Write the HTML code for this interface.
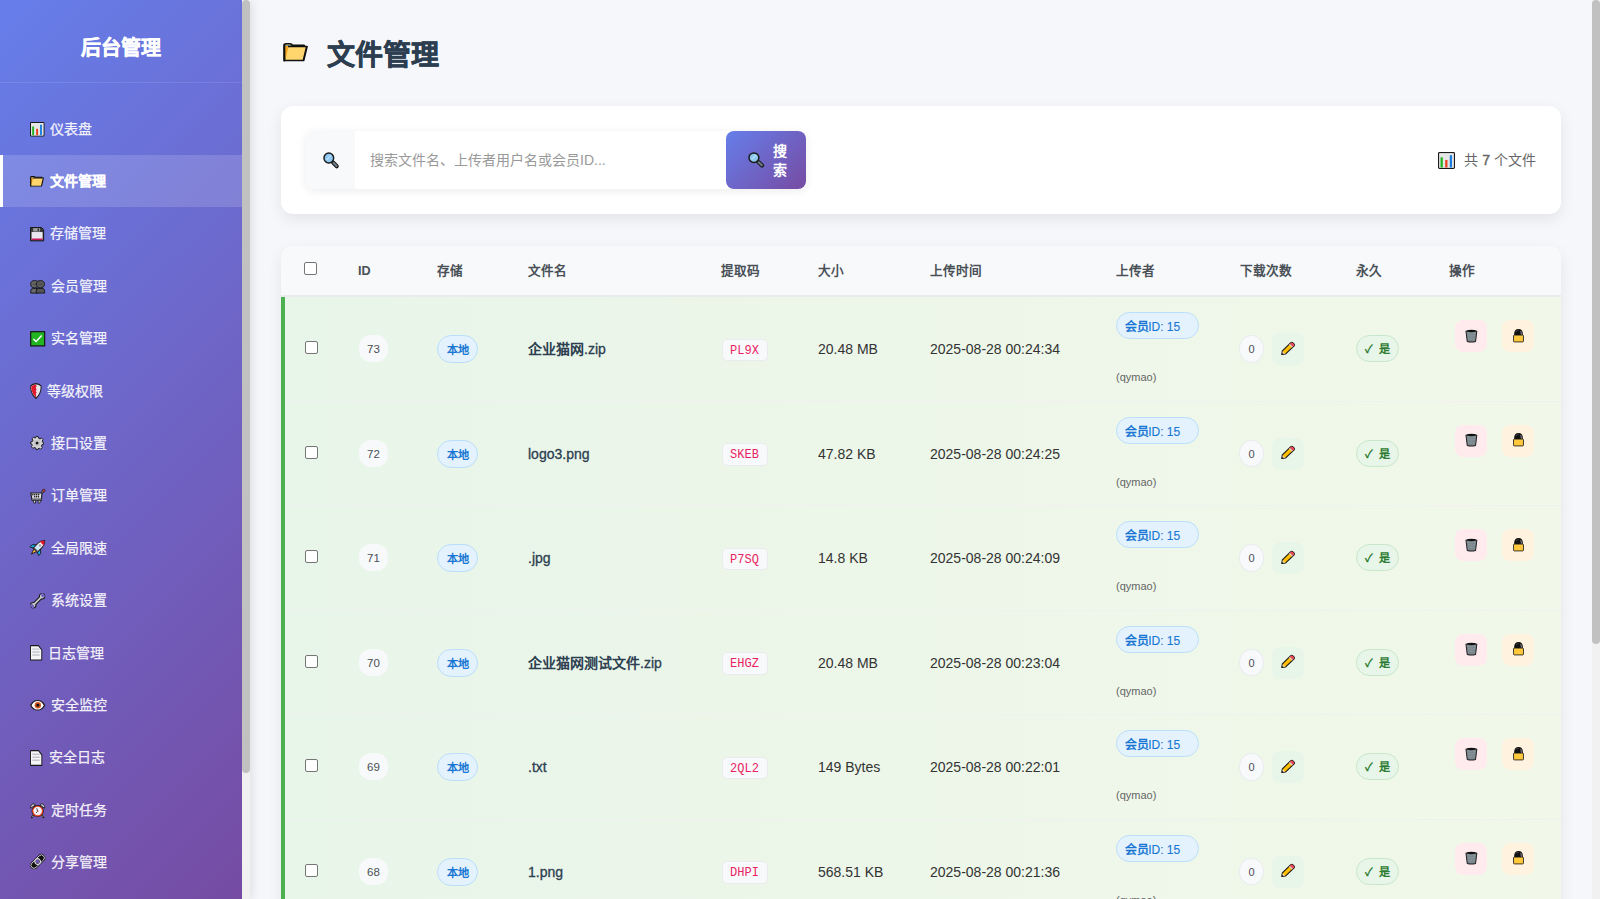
<!DOCTYPE html>
<html lang="zh-CN">
<head>
<meta charset="utf-8">
<title>文件管理</title>
<style>
*{margin:0;padding:0;box-sizing:border-box;}
html,body{width:1600px;height:899px;overflow:hidden;}
body{font-family:"Liberation Sans",sans-serif;background:#f5f7fa;color:#333;position:relative;}
.sidebar{position:absolute;left:0;top:0;width:250px;height:899px;background:linear-gradient(135deg,#667eea 0%,#764ba2 100%);box-shadow:2px 0 10px rgba(0,0,0,0.1);z-index:2;overflow:hidden;}
.sb-track{position:absolute;left:242px;top:0;width:8px;height:899px;background:#f1f1f1;}
.sb-thumb{position:absolute;left:242px;top:0;width:8px;height:773px;background:#c1c1c1;border-radius:4px;}
.sb-head{position:absolute;left:0;top:0;width:242px;height:83px;border-bottom:1px solid rgba(255,255,255,0.1);}
.sb-head h2{position:absolute;left:0;width:242px;top:34px;text-align:center;color:#fff;font-size:20px;font-weight:bold;line-height:28px;-webkit-text-stroke:0.4px #fff;}
.nav{position:absolute;left:0;top:102.6px;width:242px;}
.nav a{position:absolute;left:0;width:242px;height:52.4px;line-height:52.4px;color:rgba(255,255,255,0.9);font-size:14px;text-decoration:none;white-space:nowrap;}
.nt{position:absolute;top:0;-webkit-text-stroke:0.25px rgba(255,255,255,0.9);}
.ic{position:absolute;overflow:visible;}
.nav a.active{background:rgba(255,255,255,0.15);box-shadow:inset 3px 0 0 #fff;color:#fff;font-weight:bold;}

.page-track{position:absolute;left:1592px;top:0;width:8px;height:899px;background:#f1f1f1;}
.page-thumb{position:absolute;left:1592px;top:0;width:8px;height:644px;background:#c1c1c1;border-radius:4px;}
.main{position:absolute;left:250px;top:0;width:1342px;height:899px;}
.title{position:absolute;left:77px;top:33px;height:46px;line-height:46px;font-size:28px;font-weight:bold;color:#2c3e50;white-space:nowrap;-webkit-text-stroke:0.5px #2c3e50;}
.card{position:absolute;left:31px;width:1280px;background:#fff;border-radius:12px;box-shadow:0 5px 15px rgba(0,0,0,0.08);}

.search{position:absolute;left:25px;top:25px;width:500px;height:58px;border-radius:8px;box-shadow:0 2px 10px rgba(0,0,0,0.08);background:#fff;}
.search .pre{position:absolute;left:0;top:0;width:49px;height:58px;background:#f8f9fa;border-radius:8px 0 0 8px;text-align:center;line-height:58px;font-size:14px;}
.search .ph{position:absolute;left:64px;top:0;line-height:58px;font-size:14px;color:#999;white-space:nowrap;}
.sbtn{position:absolute;left:445px;top:25px;width:80px;height:58px;border-radius:8px;background:linear-gradient(135deg,#667eea 0%,#764ba2 100%);color:#fff;}
.sbtn .emo{position:absolute;left:21px;top:19px;font-size:14px;line-height:20px;}
.sbtn .t{position:absolute;left:47px;top:11px;width:14px;font-size:14px;line-height:19px;font-weight:bold;}
.info{position:absolute;right:25px;top:25px;line-height:58px;font-size:14px;color:#666;white-space:nowrap;}
.info b{font-weight:normal;-webkit-text-stroke:0.45px #666;}
.card .ic,.search .ic,.sbtn .ic,.main > .ic{position:absolute;}
.tcard{overflow:hidden;}
.thead{position:absolute;left:0;top:0;width:1280px;height:51px;background:#f8f9fa;border-bottom:2px solid #e9ecef;}
.thead span{position:absolute;top:0;line-height:51px;font-size:12.6px;font-weight:bold;color:#495057;white-space:nowrap;}
.cb{position:absolute;width:13px;height:13px;border:1px solid #767676;border-radius:2px;background:#fff;}
.thead .cb{left:23px;top:16px;}
.rows{position:absolute;left:0;top:51px;width:1280px;}
.row{position:relative;height:104.5px;border-bottom:1px solid #f0f0f0;margin-left:4px;background:linear-gradient(90deg,#e8f5e9 0%,#f1f8e9 100%);}
.gbar{position:absolute;left:-4px;top:0;width:4px;height:105.5px;background:#4caf50;}
.ck{font-weight:bold;margin-right:2px;}
.ubl{font-weight:normal;-webkit-text-stroke:0.1px #1976d2;letter-spacing:0;}
.row > span{position:absolute;white-space:nowrap;}
.row .cb{left:20px;top:44px;}
.idb{left:74px;top:38.4px;width:29px;height:27px;line-height:29px;text-align:center;background:#f8f9fa;border-radius:12px;font-size:11.5px;color:#495057;}
.stb{left:152px;top:38px;width:41px;height:28px;line-height:28px;text-align:center;background:#e3f2fd;border:1px solid #bbdefb;border-radius:14px;font-size:11.2px;font-weight:bold;color:#1976d2;}
.fn{left:243px;top:40px;line-height:24px;font-size:14px;font-weight:normal;color:#2c3e50;-webkit-text-stroke:0.3px #2c3e50;}
.fn b{-webkit-text-stroke:0;}
.code{left:436.5px;top:41.5px;width:46px;height:22.5px;line-height:21px;text-align:center;background:#f8f9fa;border:1px solid #e9ecef;border-radius:5px;font-family:"Liberation Mono",monospace;font-size:12px;line-height:22px;color:#e91e63;}
.sz{left:533px;top:40px;line-height:24px;font-size:14px;color:#333;}
.tm{left:645px;top:40px;line-height:24px;font-size:14px;color:#333;}
.ub{left:831px;top:15.4px;width:83px;height:27px;line-height:28px;padding-left:8px;background:#e3f2fd;border:1px solid #bbdefb;border-radius:14px;font-size:12px;font-weight:bold;color:#1976d2;letter-spacing:-0.4px;}
.un{left:831px;top:72px;line-height:16px;font-size:11px;color:#666;}
.dc{left:954.4px;top:38px;width:24.4px;height:27.5px;line-height:27px;text-align:center;background:#f8f9fa;border:1px solid #e9ecef;border-radius:50%;font-size:11px;color:#495057;}
.edit{left:987px;top:36px;width:32px;height:32px;line-height:32px;text-align:center;background:#e8f5e9;border-radius:8px;font-size:14px;}
.perm{left:1071px;top:38px;width:43px;height:27px;line-height:26px;text-align:center;background:#e8f5e9;border:1px solid #c8e6c9;border-radius:14px;font-size:11.2px;font-weight:bold;color:#2e7d32;}
.del{left:1170px;top:23px;width:32px;height:32px;line-height:32px;text-align:center;background:#ffebee;border-radius:8px;font-size:14px;}
.lock{left:1217px;top:23px;width:32px;height:32px;line-height:32px;text-align:center;background:#fff3e0;border-radius:8px;font-size:14px;}
</style>
</head>
<body>
<div class="sidebar">
  <div class="sb-head"><h2>后台管理</h2></div>
  <div class="nav">
    <a style="top:0.00px"><svg class="ic" style="left:30px;top:19.400000000000006px;width:14.5px;height:14.5px;" viewBox="0 0 16 16" preserveAspectRatio="none"><rect x="0.6" y="0.6" width="14.8" height="14.8" rx="0.8" fill="#f2f2f2" stroke="#1a1a1a" stroke-width="1.2"/><rect x="1.3" y="1.3" width="13.4" height="13.4" fill="#e6e6e6"/><rect x="2.4" y="5" width="2.1" height="9.6" fill="#21b321"/><rect x="6.8" y="7.5" width="2.1" height="7.1" fill="#e8401c"/><rect x="11.1" y="3" width="2.1" height="11.6" fill="#1b7de0"/></svg><span class="nt" style="left:50px">仪表盘</span></a>
    <a class="active" style="top:52.40px"><svg class="ic" style="left:30px;top:21.0px;width:14px;height:10.6px;" viewBox="0 0 16 16" preserveAspectRatio="none"><path d="M0.8 15.2 V1.9 Q0.8 0.7 2.1 0.7 H4.4 Q5.5 0.7 5.9 1.9 H13.4 V3.4 L0.8 15.2 Z" fill="#f2a51c" stroke="#111" stroke-width="1.4" stroke-linejoin="round"/><path d="M1.7 2.4 Q1.7 1.6 2.5 1.6 H4.3 Q4.9 1.6 5.1 2.4 Z" fill="#3d9be0"/><path d="M3.6 3 H15.3 L13.1 15.2 H1.4 Z" fill="#ffd56e"/><path d="M3.2 3 H15.3 L13.1 15.2 H0.8" fill="none" stroke="#111" stroke-width="1.3" stroke-linejoin="round"/></svg><span class="nt" style="left:50px">文件管理</span></a>
    <a style="top:104.80px"><svg class="ic" style="left:30px;top:19.600000000000023px;width:14.2px;height:14.4px;" viewBox="0 0 16 16" preserveAspectRatio="none"><path d="M0.6 0.6 H13 L15.4 3 V15.4 H0.6 Z" fill="#3c3c3c" stroke="#151515" stroke-width="1.1" stroke-linejoin="round"/><rect x="3.6" y="1.2" width="7.6" height="3.8" fill="#9c9c9c"/><rect x="8.6" y="1.7" width="1.4" height="2.8" fill="#222"/><rect x="1.8" y="5.6" width="12.4" height="8.9" fill="#e9e8f0"/><rect x="1.8" y="12.8" width="12.4" height="1.7" fill="#c8175a"/></svg><span class="nt" style="left:50px">存储管理</span></a>
    <a style="top:157.20px"><svg class="ic" style="left:30px;top:20.200000000000045px;width:15.3px;height:13.8px;" viewBox="0 0 16 16" preserveAspectRatio="none"><path d="M0.8 15.2 V12.6 Q0.8 9.8 3.5 9.8 H8 V15.2 Z" fill="#6a6a6a" stroke="#151515" stroke-width="1"/><path d="M6.5 15.2 V12.6 Q6.5 9.8 9.2 9.8 H12.6 Q15.3 9.8 15.3 12.6 V15.2 Z" fill="#555" stroke="#151515" stroke-width="1"/><circle cx="4.9" cy="4.9" r="4.2" fill="#666" stroke="#151515" stroke-width="1"/><circle cx="10.9" cy="4.9" r="4.2" fill="#5a5a5a" stroke="#151515" stroke-width="1"/><path d="M3 5 H7 M9 5 H13" stroke="#333" stroke-width="0.6"/></svg><span class="nt" style="left:51px">会员管理</span></a>
    <a style="top:209.60px"><svg class="ic" style="left:30px;top:19.0px;width:15.3px;height:15.6px;" viewBox="0 0 16 16" preserveAspectRatio="none"><rect x="0.7" y="0.7" width="14.6" height="14.6" fill="#22b522" stroke="#1a1a1a" stroke-width="1.3"/><path d="M3.6 8.2 L6.4 10.8 L12.2 4.6" fill="none" stroke="#fff" stroke-width="1.5"/></svg><span class="nt" style="left:51px">实名管理</span></a>
    <a style="top:262.00px"><svg class="ic" style="left:30px;top:18.19999999999999px;width:11.8px;height:16px;" viewBox="0 0 16 16" preserveAspectRatio="none"><path d="M8 0.7 Q12.5 1.2 15.2 3 Q15.2 11 8 15.4 Q0.8 11 0.8 3 Q3.5 1.2 8 0.7 Z" fill="#e8e8ec" stroke="#1a1a1a" stroke-width="1.3" stroke-linejoin="round"/><path d="M8 1.6 L9 3.2 L7.8 4.8 L9 6.4 L7.8 8 L9 9.6 L7.8 11.2 L8.6 12.8 L8 14.4 Q2 10.6 1.7 3.6 Q4.4 2 8 1.6 Z" fill="#e0182d"/></svg><span class="nt" style="left:47px">等级权限</span></a>
    <a style="top:314.40px"><svg class="ic" style="left:30px;top:18.80000000000001px;width:14.1px;height:14.2px;" viewBox="0 0 16 16" preserveAspectRatio="none"><path d="M6.6 0.7 H9.4 L9.8 2.6 L11.4 3.3 L13 2.2 L14.9 4.1 L13.8 5.7 L14.5 7.3 L15.3 7.6 V9.4 L13.6 9.8 L12.9 11.4 L14 13 L12.1 14.9 L10.5 13.8 L9.1 14.4 L8.8 15.3 H7 L6.6 13.6 L5 12.9 L3.4 14 L1.5 12.1 L2.6 10.5 L1.9 8.9 L0.7 8.6 V6.8 L2.6 6.4 L3.3 4.8 L2.2 3.2 L4.1 1.3 L5.7 2.4 L6.3 2.1 Z" fill="#d6d6d6" stroke="#1a1a1a" stroke-width="1.1" stroke-linejoin="round"/><circle cx="8" cy="8" r="3.8" fill="#c4c4c4"/><circle cx="8" cy="8" r="1.6" fill="#111"/></svg><span class="nt" style="left:51px">接口设置</span></a>
    <a style="top:366.80px"><svg class="ic" style="left:30px;top:19.30000000000001px;width:15.3px;height:15.1px;" viewBox="0 0 16 16" preserveAspectRatio="none"><path d="M12.2 4.6 L13.8 1.8" stroke="#1a1a1a" stroke-width="2"/><path d="M12.2 4.6 L13.8 1.8" stroke="#ccc" stroke-width="0.8"/><circle cx="14.4" cy="1.7" r="1.5" fill="#c9403a" stroke="#1a1a1a" stroke-width="0.7"/><path d="M0.8 4.2 H12.6 L11.8 12 H2.2 Z" fill="#dcdce2" stroke="#1a1a1a" stroke-width="1.2" stroke-linejoin="round"/><rect x="2.2" y="9.8" width="9.6" height="2.2" fill="#77777f"/><g fill="#111"><circle cx="3" cy="6.2" r="0.8"/><circle cx="5" cy="6.2" r="0.8"/><circle cx="7" cy="6.2" r="0.8"/><circle cx="9" cy="6.2" r="0.8"/><circle cx="4.9" cy="8.3" r="0.8"/><circle cx="6.9" cy="8.3" r="0.8"/><circle cx="8.9" cy="8.3" r="0.8"/></g><path d="M3.2 12 L4.2 15 L5.8 15 L5.6 12 Z M8.6 12 L8.6 15 L10.2 15 L11 12 Z" fill="#ececf0" stroke="#1a1a1a" stroke-width="0.9" stroke-linejoin="round"/></svg><span class="nt" style="left:51px">订单管理</span></a>
    <a style="top:419.20px"><svg class="ic" style="left:30px;top:18.5px;width:15.3px;height:15.6px;" viewBox="0 0 16 16" preserveAspectRatio="none"><g transform="rotate(45 8 8)"><path d="M6 11.2 H10 L8 17.2 Z" fill="#f58a1f" stroke="#1a1a1a" stroke-width="0.9" stroke-linejoin="round"/><path d="M7 12 H9 L8 15 Z" fill="#ffd23f"/><path d="M5.2 6.4 L1.6 10 V13 L5.2 11.4 Z M10.8 6.4 L14.4 10 V13 L10.8 11.4 Z" fill="#12b0ec" stroke="#1a1a1a" stroke-width="0.9" stroke-linejoin="round"/><path d="M8 -2.6 Q11 0 11 4 V11.6 H5 V4 Q5 0 8 -2.6 Z" fill="#f6f6fa" stroke="#1a1a1a" stroke-width="1" stroke-linejoin="round"/><path d="M8 -2.1 Q10.2 -0.2 10.6 2 H5.4 Q5.8 -0.2 8 -2.1 Z" fill="#e8132b"/><rect x="5.5" y="10" width="5" height="1.6" fill="#555"/><circle cx="8" cy="4.6" r="1.5" fill="#a8a8b0"/><path d="M6.6 7.4 V9 M8 7.4 V9 M9.4 7.4 V9" stroke="#3ab0e8" stroke-width="0.8"/></g></svg><span class="nt" style="left:51px">全局限速</span></a>
    <a style="top:471.60px"><svg class="ic" style="left:30px;top:19.100000000000023px;width:15.3px;height:15.5px;" viewBox="0 0 16 16" preserveAspectRatio="none"><mask id="wmask"><rect x="-2" y="-2" width="20" height="20" fill="#fff"/><path d="M12.6 -0.6 L16.6 3.4 L13.4 4.6 L11.4 2.6 Z M-0.6 12.6 L3.4 16.6 L4.6 13.4 L2.6 11.4 Z" fill="#000"/></mask><g mask="url(#wmask)"><path d="M3 13 L13 3" stroke="#1a1a1a" stroke-width="3.8" stroke-linecap="round"/><circle cx="12.6" cy="3.4" r="2.8" fill="#c8c8c8" stroke="#1a1a1a" stroke-width="1.1"/><circle cx="3.4" cy="12.6" r="2.8" fill="#c8c8c8" stroke="#1a1a1a" stroke-width="1.1"/><path d="M3 13 L13 3" stroke="#c8c8c8" stroke-width="1.8" stroke-linecap="round"/></g></svg><span class="nt" style="left:51px">系统设置</span></a>
    <a style="top:524.00px"><svg class="ic" style="left:30px;top:18.600000000000023px;width:12.3px;height:15.7px;" viewBox="0 0 16 16" preserveAspectRatio="none"><path d="M0.7 0.7 H11 L15.3 5 V15.3 H0.7 Z" fill="#f6f6f8" stroke="#1a1a1a" stroke-width="1.2" stroke-linejoin="round"/><path d="M3 4.2 H12.6 M3 7.2 H12.6 M3 10.2 H12.6" stroke="#c4c4cc" stroke-width="1.4"/></svg><span class="nt" style="left:48px">日志管理</span></a>
    <a style="top:576.40px"><svg class="ic" style="left:30px;top:20.600000000000023px;width:15.3px;height:10.7px;" viewBox="0 0 16 16" preserveAspectRatio="none"><path d="M0.8 8 Q3.5 0.9 8 0.9 Q12.5 0.9 15.2 8 Q12.5 15.1 8 15.1 Q3.5 15.1 0.8 8 Z" fill="#fff" stroke="#1a1a1a" stroke-width="1.5"/><ellipse cx="8.2" cy="8" rx="3.3" ry="4.9" fill="#d2561e"/><ellipse cx="8.2" cy="8" rx="1.5" ry="2.2" fill="#111"/></svg><span class="nt" style="left:51px">安全监控</span></a>
    <a style="top:628.80px"><svg class="ic" style="left:30px;top:18.600000000000023px;width:12.4px;height:16px;" viewBox="0 0 16 16" preserveAspectRatio="none"><path d="M0.7 0.7 H11 L15.3 5 V15.3 H0.7 Z" fill="#f6f6f8" stroke="#1a1a1a" stroke-width="1.2" stroke-linejoin="round"/><path d="M3 4.2 H12.6 M3 7.2 H12.6 M3 10.2 H12.6" stroke="#c4c4cc" stroke-width="1.4"/></svg><span class="nt" style="left:48.5px">安全日志</span></a>
    <a style="top:681.20px"><svg class="ic" style="left:30px;top:19.200000000000045px;width:15.3px;height:15px;" viewBox="0 0 16 16" preserveAspectRatio="none"><path d="M0.8 5.6 Q0 1.4 4.4 0.8 L5.4 2.2 Z M15.2 5.6 Q16 1.4 11.6 0.8 L10.6 2.2 Z" fill="#d8d8de" stroke="#1a1a1a" stroke-width="0.9" stroke-linejoin="round"/><path d="M3.6 13 L1.8 15.4 M12.4 13 L14.2 15.4" stroke="#1a1a1a" stroke-width="1.8" stroke-linecap="round"/><path d="M3.6 13 L2.2 15 M12.4 13 L13.8 15" stroke="#ccc" stroke-width="0.7"/><circle cx="8" cy="8.6" r="6.4" fill="#1a1a1a"/><circle cx="8" cy="8.6" r="5.8" fill="#e8401c"/><circle cx="8" cy="8.6" r="4.5" fill="#f2f2fa"/><path d="M7 5.6 L8 8.6 L6.4 10.6" stroke="#333" stroke-width="0.9" fill="none"/><circle cx="8.3" cy="8.6" r="0.7" fill="#d33"/></svg><span class="nt" style="left:51px">定时任务</span></a>
    <a style="top:733.60px"><svg class="ic" style="left:30px;top:18.199999999999932px;width:15.3px;height:15.2px;" viewBox="0 0 16 16" preserveAspectRatio="none"><g transform="rotate(-45 8 8)"><path d="M2.6 3.9 H13.4 A4.1 4.1 0 0 1 13.4 12.1 H2.6 A4.1 4.1 0 0 1 2.6 3.9 Z M10.1 8 A2.1 2.1 0 1 0 5.9 8 A2.1 2.1 0 1 0 10.1 8 Z" fill="#111" fill-rule="evenodd"/><rect x="-0.6" y="4.9" width="17.2" height="6.2" rx="3.1" fill="none" stroke="#e0e0e4" stroke-width="0.9"/><circle cx="8" cy="8" r="2.9" fill="none" stroke="#e0e0e4" stroke-width="1.1"/></g></svg><span class="nt" style="left:51px">分享管理</span></a>
  </div>
  <div class="sb-track"></div>
  <div class="sb-thumb"></div>
</div>
<div class="main">
  <svg class="ic" style="left:33.10000000000002px;top:42.5px;width:25px;height:18.5px;" viewBox="0 0 16 16" preserveAspectRatio="none"><path d="M0.8 15.2 V1.9 Q0.8 0.7 2.1 0.7 H4.4 Q5.5 0.7 5.9 1.9 H13.4 V3.4 L0.8 15.2 Z" fill="#f2a51c" stroke="#111" stroke-width="1.4" stroke-linejoin="round"/><path d="M1.7 2.4 Q1.7 1.6 2.5 1.6 H4.3 Q4.9 1.6 5.1 2.4 Z" fill="#3d9be0"/><path d="M3.6 3 H15.3 L13.1 15.2 H1.4 Z" fill="#ffd56e"/><path d="M3.2 3 H15.3 L13.1 15.2 H0.8" fill="none" stroke="#111" stroke-width="1.3" stroke-linejoin="round"/></svg>
  <div class="title">文件管理</div>
  <div class="card" style="top:106px;height:108px;">
    <div class="search"><span class="pre"></span><svg class="ic" style="left:16.80000000000001px;top:21px;width:15.5px;height:16px;" viewBox="0 0 16 16" preserveAspectRatio="none"><path d="M10.4 10.4 L14.2 14.2" stroke="#1a1a1a" stroke-width="4.2" stroke-linecap="round"/><path d="M10.8 10.8 L14 14" stroke="#6e7f88" stroke-width="2" stroke-linecap="round"/><circle cx="6" cy="6" r="5" fill="#8ec8f0" stroke="#1a1a1a" stroke-width="1.5"/><path d="M3.6 8 L8.2 3.4" stroke="#b8e0fa" stroke-width="1.2"/></svg><span class="ph">搜索文件名、上传者用户名或会员ID...</span></div>
    <div class="sbtn"><svg class="ic" style="left:21.600000000000023px;top:21.400000000000006px;width:15.8px;height:15.2px;" viewBox="0 0 16 16" preserveAspectRatio="none"><path d="M10.4 10.4 L14.2 14.2" stroke="#1a1a1a" stroke-width="4.2" stroke-linecap="round"/><path d="M10.8 10.8 L14 14" stroke="#6e7f88" stroke-width="2" stroke-linecap="round"/><circle cx="6" cy="6" r="5" fill="#8ec8f0" stroke="#1a1a1a" stroke-width="1.5"/><path d="M3.6 8 L8.2 3.4" stroke="#b8e0fa" stroke-width="1.2"/></svg><span class="t">搜索</span></div>
    <svg class="ic" style="left:1157px;top:45.80000000000001px;width:17px;height:17px;" viewBox="0 0 16 16" preserveAspectRatio="none"><rect x="0.6" y="0.6" width="14.8" height="14.8" rx="0.8" fill="#f2f2f2" stroke="#1a1a1a" stroke-width="1.2"/><rect x="1.3" y="1.3" width="13.4" height="13.4" fill="#e6e6e6"/><rect x="2.4" y="5" width="2.1" height="9.6" fill="#21b321"/><rect x="6.8" y="7.5" width="2.1" height="7.1" fill="#e8401c"/><rect x="11.1" y="3" width="2.1" height="11.6" fill="#1b7de0"/></svg>
    <div class="info">共 <b>7</b> 个文件</div>
  </div>
  <div class="card tcard" style="top:246px;height:760px;">
    <div class="thead">
      <span class="cb"></span>
      <span style="left:77px">ID</span>
      <span style="left:156px">存储</span>
      <span style="left:247px">文件名</span>
      <span style="left:440px">提取码</span>
      <span style="left:537px">大小</span>
      <span style="left:649px">上传时间</span>
      <span style="left:835px">上传者</span>
      <span style="left:959px">下载次数</span>
      <span style="left:1075px">永久</span>
      <span style="left:1168px">操作</span>
    </div>
    <div class="rows">
    <div class="row">
      <span class="gbar"></span>
      <span class="cb"></span>
      <span class="idb">73</span>
      <span class="stb">本地</span>
      <span class="fn"><b>企业猫网</b>.zip</span>
      <span class="code">PL9X</span>
      <span class="sz">20.48 MB</span>
      <span class="tm">2025-08-28 00:24:34</span>
      <span class="ub">会员<span class="ubl">ID: 15</span></span>
      <span class="un">(qymao)</span>
      <span class="dc">0</span>
      <span class="edit"></span><svg class="ic" style="left:996.0999999999999px;top:44.9px;width:13.8px;height:13.3px;" viewBox="0 0 16 16" preserveAspectRatio="none"><path d="M0.9 15.1 L1.6 10.6 L11.4 0.8 Q12.6 -0.2 13.8 1 L15 2.2 Q16.2 3.4 15.2 4.6 L5.4 14.4 Z" fill="#ffbf00" stroke="#1a1a1a" stroke-width="1.3" stroke-linejoin="round"/><path d="M11.6 1 Q12.6 0.2 13.6 1.2 L14.8 2.4 Q15.8 3.4 15 4.4 L13.4 6 L10 2.6 Z" fill="#e8485a"/><path d="M9.8 2.8 L13.2 6.2" stroke="#d8d8e0" stroke-width="1.3"/><path d="M1.5 14.5 L2 11 L5 14 Z" fill="#f8d8b8"/><path d="M0.9 15.1 L1.3 12.8 L3.2 14.7 Z" fill="#222"/></svg>
      <span class="perm"><span class="ck">✓</span> 是</span>
      <span class="del"></span><svg class="ic" style="left:1180px;top:31.9px;width:12.8px;height:13.7px;" viewBox="0 0 16 16" preserveAspectRatio="none"><path d="M1.2 2.6 Q8 0.2 14.8 2.6 L13.2 14.6 Q8 16 2.8 14.6 Z" fill="#7c888e" stroke="#1a1a1a" stroke-width="1.2" stroke-linejoin="round"/><ellipse cx="8" cy="2.4" rx="5.6" ry="1.3" fill="#111"/><path d="M3.4 5 H12.6 M3.6 8 H12.4 M3.8 11 H12.2" stroke="#a4b0b6" stroke-width="0.7" stroke-dasharray="1 1"/></svg>
      <span class="lock"></span><svg class="ic" style="left:1228px;top:31.9px;width:11px;height:13.5px;" viewBox="0 0 16 16" preserveAspectRatio="none"><path d="M2.4 7.6 V5.6 Q2.4 0.7 8 0.7 Q13.6 0.7 13.6 5.6 V7.6 Z" fill="#111" stroke="#1a1a1a" stroke-width="1.2"/><path d="M11.2 2.6 Q12.2 4 12.2 7.2" stroke="#c8c8c8" stroke-width="0.9" fill="none"/><path d="M4.6 3 Q6 1.8 8 1.8" stroke="#777" stroke-width="0.6" fill="none"/><rect x="0.8" y="7.2" width="14.4" height="8.1" rx="1" fill="#ffc83d" stroke="#1a1a1a" stroke-width="1.1"/></svg>
    </div>
    <div class="row">
      <span class="gbar"></span>
      <span class="cb"></span>
      <span class="idb">72</span>
      <span class="stb">本地</span>
      <span class="fn">logo3.png</span>
      <span class="code">SKEB</span>
      <span class="sz">47.82 KB</span>
      <span class="tm">2025-08-28 00:24:25</span>
      <span class="ub">会员<span class="ubl">ID: 15</span></span>
      <span class="un">(qymao)</span>
      <span class="dc">0</span>
      <span class="edit"></span><svg class="ic" style="left:996.0999999999999px;top:44.9px;width:13.8px;height:13.3px;" viewBox="0 0 16 16" preserveAspectRatio="none"><path d="M0.9 15.1 L1.6 10.6 L11.4 0.8 Q12.6 -0.2 13.8 1 L15 2.2 Q16.2 3.4 15.2 4.6 L5.4 14.4 Z" fill="#ffbf00" stroke="#1a1a1a" stroke-width="1.3" stroke-linejoin="round"/><path d="M11.6 1 Q12.6 0.2 13.6 1.2 L14.8 2.4 Q15.8 3.4 15 4.4 L13.4 6 L10 2.6 Z" fill="#e8485a"/><path d="M9.8 2.8 L13.2 6.2" stroke="#d8d8e0" stroke-width="1.3"/><path d="M1.5 14.5 L2 11 L5 14 Z" fill="#f8d8b8"/><path d="M0.9 15.1 L1.3 12.8 L3.2 14.7 Z" fill="#222"/></svg>
      <span class="perm"><span class="ck">✓</span> 是</span>
      <span class="del"></span><svg class="ic" style="left:1180px;top:31.9px;width:12.8px;height:13.7px;" viewBox="0 0 16 16" preserveAspectRatio="none"><path d="M1.2 2.6 Q8 0.2 14.8 2.6 L13.2 14.6 Q8 16 2.8 14.6 Z" fill="#7c888e" stroke="#1a1a1a" stroke-width="1.2" stroke-linejoin="round"/><ellipse cx="8" cy="2.4" rx="5.6" ry="1.3" fill="#111"/><path d="M3.4 5 H12.6 M3.6 8 H12.4 M3.8 11 H12.2" stroke="#a4b0b6" stroke-width="0.7" stroke-dasharray="1 1"/></svg>
      <span class="lock"></span><svg class="ic" style="left:1228px;top:31.9px;width:11px;height:13.5px;" viewBox="0 0 16 16" preserveAspectRatio="none"><path d="M2.4 7.6 V5.6 Q2.4 0.7 8 0.7 Q13.6 0.7 13.6 5.6 V7.6 Z" fill="#111" stroke="#1a1a1a" stroke-width="1.2"/><path d="M11.2 2.6 Q12.2 4 12.2 7.2" stroke="#c8c8c8" stroke-width="0.9" fill="none"/><path d="M4.6 3 Q6 1.8 8 1.8" stroke="#777" stroke-width="0.6" fill="none"/><rect x="0.8" y="7.2" width="14.4" height="8.1" rx="1" fill="#ffc83d" stroke="#1a1a1a" stroke-width="1.1"/></svg>
    </div>
    <div class="row">
      <span class="gbar"></span>
      <span class="cb"></span>
      <span class="idb">71</span>
      <span class="stb">本地</span>
      <span class="fn">.jpg</span>
      <span class="code">P7SQ</span>
      <span class="sz">14.8 KB</span>
      <span class="tm">2025-08-28 00:24:09</span>
      <span class="ub">会员<span class="ubl">ID: 15</span></span>
      <span class="un">(qymao)</span>
      <span class="dc">0</span>
      <span class="edit"></span><svg class="ic" style="left:996.0999999999999px;top:44.9px;width:13.8px;height:13.3px;" viewBox="0 0 16 16" preserveAspectRatio="none"><path d="M0.9 15.1 L1.6 10.6 L11.4 0.8 Q12.6 -0.2 13.8 1 L15 2.2 Q16.2 3.4 15.2 4.6 L5.4 14.4 Z" fill="#ffbf00" stroke="#1a1a1a" stroke-width="1.3" stroke-linejoin="round"/><path d="M11.6 1 Q12.6 0.2 13.6 1.2 L14.8 2.4 Q15.8 3.4 15 4.4 L13.4 6 L10 2.6 Z" fill="#e8485a"/><path d="M9.8 2.8 L13.2 6.2" stroke="#d8d8e0" stroke-width="1.3"/><path d="M1.5 14.5 L2 11 L5 14 Z" fill="#f8d8b8"/><path d="M0.9 15.1 L1.3 12.8 L3.2 14.7 Z" fill="#222"/></svg>
      <span class="perm"><span class="ck">✓</span> 是</span>
      <span class="del"></span><svg class="ic" style="left:1180px;top:31.9px;width:12.8px;height:13.7px;" viewBox="0 0 16 16" preserveAspectRatio="none"><path d="M1.2 2.6 Q8 0.2 14.8 2.6 L13.2 14.6 Q8 16 2.8 14.6 Z" fill="#7c888e" stroke="#1a1a1a" stroke-width="1.2" stroke-linejoin="round"/><ellipse cx="8" cy="2.4" rx="5.6" ry="1.3" fill="#111"/><path d="M3.4 5 H12.6 M3.6 8 H12.4 M3.8 11 H12.2" stroke="#a4b0b6" stroke-width="0.7" stroke-dasharray="1 1"/></svg>
      <span class="lock"></span><svg class="ic" style="left:1228px;top:31.9px;width:11px;height:13.5px;" viewBox="0 0 16 16" preserveAspectRatio="none"><path d="M2.4 7.6 V5.6 Q2.4 0.7 8 0.7 Q13.6 0.7 13.6 5.6 V7.6 Z" fill="#111" stroke="#1a1a1a" stroke-width="1.2"/><path d="M11.2 2.6 Q12.2 4 12.2 7.2" stroke="#c8c8c8" stroke-width="0.9" fill="none"/><path d="M4.6 3 Q6 1.8 8 1.8" stroke="#777" stroke-width="0.6" fill="none"/><rect x="0.8" y="7.2" width="14.4" height="8.1" rx="1" fill="#ffc83d" stroke="#1a1a1a" stroke-width="1.1"/></svg>
    </div>
    <div class="row">
      <span class="gbar"></span>
      <span class="cb"></span>
      <span class="idb">70</span>
      <span class="stb">本地</span>
      <span class="fn"><b>企业猫网测试文件</b>.zip</span>
      <span class="code">EHGZ</span>
      <span class="sz">20.48 MB</span>
      <span class="tm">2025-08-28 00:23:04</span>
      <span class="ub">会员<span class="ubl">ID: 15</span></span>
      <span class="un">(qymao)</span>
      <span class="dc">0</span>
      <span class="edit"></span><svg class="ic" style="left:996.0999999999999px;top:44.9px;width:13.8px;height:13.3px;" viewBox="0 0 16 16" preserveAspectRatio="none"><path d="M0.9 15.1 L1.6 10.6 L11.4 0.8 Q12.6 -0.2 13.8 1 L15 2.2 Q16.2 3.4 15.2 4.6 L5.4 14.4 Z" fill="#ffbf00" stroke="#1a1a1a" stroke-width="1.3" stroke-linejoin="round"/><path d="M11.6 1 Q12.6 0.2 13.6 1.2 L14.8 2.4 Q15.8 3.4 15 4.4 L13.4 6 L10 2.6 Z" fill="#e8485a"/><path d="M9.8 2.8 L13.2 6.2" stroke="#d8d8e0" stroke-width="1.3"/><path d="M1.5 14.5 L2 11 L5 14 Z" fill="#f8d8b8"/><path d="M0.9 15.1 L1.3 12.8 L3.2 14.7 Z" fill="#222"/></svg>
      <span class="perm"><span class="ck">✓</span> 是</span>
      <span class="del"></span><svg class="ic" style="left:1180px;top:31.9px;width:12.8px;height:13.7px;" viewBox="0 0 16 16" preserveAspectRatio="none"><path d="M1.2 2.6 Q8 0.2 14.8 2.6 L13.2 14.6 Q8 16 2.8 14.6 Z" fill="#7c888e" stroke="#1a1a1a" stroke-width="1.2" stroke-linejoin="round"/><ellipse cx="8" cy="2.4" rx="5.6" ry="1.3" fill="#111"/><path d="M3.4 5 H12.6 M3.6 8 H12.4 M3.8 11 H12.2" stroke="#a4b0b6" stroke-width="0.7" stroke-dasharray="1 1"/></svg>
      <span class="lock"></span><svg class="ic" style="left:1228px;top:31.9px;width:11px;height:13.5px;" viewBox="0 0 16 16" preserveAspectRatio="none"><path d="M2.4 7.6 V5.6 Q2.4 0.7 8 0.7 Q13.6 0.7 13.6 5.6 V7.6 Z" fill="#111" stroke="#1a1a1a" stroke-width="1.2"/><path d="M11.2 2.6 Q12.2 4 12.2 7.2" stroke="#c8c8c8" stroke-width="0.9" fill="none"/><path d="M4.6 3 Q6 1.8 8 1.8" stroke="#777" stroke-width="0.6" fill="none"/><rect x="0.8" y="7.2" width="14.4" height="8.1" rx="1" fill="#ffc83d" stroke="#1a1a1a" stroke-width="1.1"/></svg>
    </div>
    <div class="row">
      <span class="gbar"></span>
      <span class="cb"></span>
      <span class="idb">69</span>
      <span class="stb">本地</span>
      <span class="fn">.txt</span>
      <span class="code">2QL2</span>
      <span class="sz">149 Bytes</span>
      <span class="tm">2025-08-28 00:22:01</span>
      <span class="ub">会员<span class="ubl">ID: 15</span></span>
      <span class="un">(qymao)</span>
      <span class="dc">0</span>
      <span class="edit"></span><svg class="ic" style="left:996.0999999999999px;top:44.9px;width:13.8px;height:13.3px;" viewBox="0 0 16 16" preserveAspectRatio="none"><path d="M0.9 15.1 L1.6 10.6 L11.4 0.8 Q12.6 -0.2 13.8 1 L15 2.2 Q16.2 3.4 15.2 4.6 L5.4 14.4 Z" fill="#ffbf00" stroke="#1a1a1a" stroke-width="1.3" stroke-linejoin="round"/><path d="M11.6 1 Q12.6 0.2 13.6 1.2 L14.8 2.4 Q15.8 3.4 15 4.4 L13.4 6 L10 2.6 Z" fill="#e8485a"/><path d="M9.8 2.8 L13.2 6.2" stroke="#d8d8e0" stroke-width="1.3"/><path d="M1.5 14.5 L2 11 L5 14 Z" fill="#f8d8b8"/><path d="M0.9 15.1 L1.3 12.8 L3.2 14.7 Z" fill="#222"/></svg>
      <span class="perm"><span class="ck">✓</span> 是</span>
      <span class="del"></span><svg class="ic" style="left:1180px;top:31.9px;width:12.8px;height:13.7px;" viewBox="0 0 16 16" preserveAspectRatio="none"><path d="M1.2 2.6 Q8 0.2 14.8 2.6 L13.2 14.6 Q8 16 2.8 14.6 Z" fill="#7c888e" stroke="#1a1a1a" stroke-width="1.2" stroke-linejoin="round"/><ellipse cx="8" cy="2.4" rx="5.6" ry="1.3" fill="#111"/><path d="M3.4 5 H12.6 M3.6 8 H12.4 M3.8 11 H12.2" stroke="#a4b0b6" stroke-width="0.7" stroke-dasharray="1 1"/></svg>
      <span class="lock"></span><svg class="ic" style="left:1228px;top:31.9px;width:11px;height:13.5px;" viewBox="0 0 16 16" preserveAspectRatio="none"><path d="M2.4 7.6 V5.6 Q2.4 0.7 8 0.7 Q13.6 0.7 13.6 5.6 V7.6 Z" fill="#111" stroke="#1a1a1a" stroke-width="1.2"/><path d="M11.2 2.6 Q12.2 4 12.2 7.2" stroke="#c8c8c8" stroke-width="0.9" fill="none"/><path d="M4.6 3 Q6 1.8 8 1.8" stroke="#777" stroke-width="0.6" fill="none"/><rect x="0.8" y="7.2" width="14.4" height="8.1" rx="1" fill="#ffc83d" stroke="#1a1a1a" stroke-width="1.1"/></svg>
    </div>
    <div class="row">
      <span class="gbar"></span>
      <span class="cb"></span>
      <span class="idb">68</span>
      <span class="stb">本地</span>
      <span class="fn">1.png</span>
      <span class="code">DHPI</span>
      <span class="sz">568.51 KB</span>
      <span class="tm">2025-08-28 00:21:36</span>
      <span class="ub">会员<span class="ubl">ID: 15</span></span>
      <span class="un">(qymao)</span>
      <span class="dc">0</span>
      <span class="edit"></span><svg class="ic" style="left:996.0999999999999px;top:44.9px;width:13.8px;height:13.3px;" viewBox="0 0 16 16" preserveAspectRatio="none"><path d="M0.9 15.1 L1.6 10.6 L11.4 0.8 Q12.6 -0.2 13.8 1 L15 2.2 Q16.2 3.4 15.2 4.6 L5.4 14.4 Z" fill="#ffbf00" stroke="#1a1a1a" stroke-width="1.3" stroke-linejoin="round"/><path d="M11.6 1 Q12.6 0.2 13.6 1.2 L14.8 2.4 Q15.8 3.4 15 4.4 L13.4 6 L10 2.6 Z" fill="#e8485a"/><path d="M9.8 2.8 L13.2 6.2" stroke="#d8d8e0" stroke-width="1.3"/><path d="M1.5 14.5 L2 11 L5 14 Z" fill="#f8d8b8"/><path d="M0.9 15.1 L1.3 12.8 L3.2 14.7 Z" fill="#222"/></svg>
      <span class="perm"><span class="ck">✓</span> 是</span>
      <span class="del"></span><svg class="ic" style="left:1180px;top:31.9px;width:12.8px;height:13.7px;" viewBox="0 0 16 16" preserveAspectRatio="none"><path d="M1.2 2.6 Q8 0.2 14.8 2.6 L13.2 14.6 Q8 16 2.8 14.6 Z" fill="#7c888e" stroke="#1a1a1a" stroke-width="1.2" stroke-linejoin="round"/><ellipse cx="8" cy="2.4" rx="5.6" ry="1.3" fill="#111"/><path d="M3.4 5 H12.6 M3.6 8 H12.4 M3.8 11 H12.2" stroke="#a4b0b6" stroke-width="0.7" stroke-dasharray="1 1"/></svg>
      <span class="lock"></span><svg class="ic" style="left:1228px;top:31.9px;width:11px;height:13.5px;" viewBox="0 0 16 16" preserveAspectRatio="none"><path d="M2.4 7.6 V5.6 Q2.4 0.7 8 0.7 Q13.6 0.7 13.6 5.6 V7.6 Z" fill="#111" stroke="#1a1a1a" stroke-width="1.2"/><path d="M11.2 2.6 Q12.2 4 12.2 7.2" stroke="#c8c8c8" stroke-width="0.9" fill="none"/><path d="M4.6 3 Q6 1.8 8 1.8" stroke="#777" stroke-width="0.6" fill="none"/><rect x="0.8" y="7.2" width="14.4" height="8.1" rx="1" fill="#ffc83d" stroke="#1a1a1a" stroke-width="1.1"/></svg>
    </div>
    <div class="row">
      <span class="gbar"></span>
      <span class="cb"></span>
      <span class="idb">67</span>
      <span class="stb">本地</span>
      <span class="fn">test.zip</span>
      <span class="code">ABCD</span>
      <span class="sz">1.2 MB</span>
      <span class="tm">2025-08-28 00:20:00</span>
      <span class="ub">会员<span class="ubl">ID: 15</span></span>
      <span class="un">(qymao)</span>
      <span class="dc">0</span>
      <span class="edit"></span><svg class="ic" style="left:996.0999999999999px;top:44.9px;width:13.8px;height:13.3px;" viewBox="0 0 16 16" preserveAspectRatio="none"><path d="M0.9 15.1 L1.6 10.6 L11.4 0.8 Q12.6 -0.2 13.8 1 L15 2.2 Q16.2 3.4 15.2 4.6 L5.4 14.4 Z" fill="#ffbf00" stroke="#1a1a1a" stroke-width="1.3" stroke-linejoin="round"/><path d="M11.6 1 Q12.6 0.2 13.6 1.2 L14.8 2.4 Q15.8 3.4 15 4.4 L13.4 6 L10 2.6 Z" fill="#e8485a"/><path d="M9.8 2.8 L13.2 6.2" stroke="#d8d8e0" stroke-width="1.3"/><path d="M1.5 14.5 L2 11 L5 14 Z" fill="#f8d8b8"/><path d="M0.9 15.1 L1.3 12.8 L3.2 14.7 Z" fill="#222"/></svg>
      <span class="perm"><span class="ck">✓</span> 是</span>
      <span class="del"></span><svg class="ic" style="left:1180px;top:31.9px;width:12.8px;height:13.7px;" viewBox="0 0 16 16" preserveAspectRatio="none"><path d="M1.2 2.6 Q8 0.2 14.8 2.6 L13.2 14.6 Q8 16 2.8 14.6 Z" fill="#7c888e" stroke="#1a1a1a" stroke-width="1.2" stroke-linejoin="round"/><ellipse cx="8" cy="2.4" rx="5.6" ry="1.3" fill="#111"/><path d="M3.4 5 H12.6 M3.6 8 H12.4 M3.8 11 H12.2" stroke="#a4b0b6" stroke-width="0.7" stroke-dasharray="1 1"/></svg>
      <span class="lock"></span><svg class="ic" style="left:1228px;top:31.9px;width:11px;height:13.5px;" viewBox="0 0 16 16" preserveAspectRatio="none"><path d="M2.4 7.6 V5.6 Q2.4 0.7 8 0.7 Q13.6 0.7 13.6 5.6 V7.6 Z" fill="#111" stroke="#1a1a1a" stroke-width="1.2"/><path d="M11.2 2.6 Q12.2 4 12.2 7.2" stroke="#c8c8c8" stroke-width="0.9" fill="none"/><path d="M4.6 3 Q6 1.8 8 1.8" stroke="#777" stroke-width="0.6" fill="none"/><rect x="0.8" y="7.2" width="14.4" height="8.1" rx="1" fill="#ffc83d" stroke="#1a1a1a" stroke-width="1.1"/></svg>
    </div>
    </div>
  </div>
</div>
<div class="page-track"></div>
<div class="page-thumb"></div>
</body>
</html>
